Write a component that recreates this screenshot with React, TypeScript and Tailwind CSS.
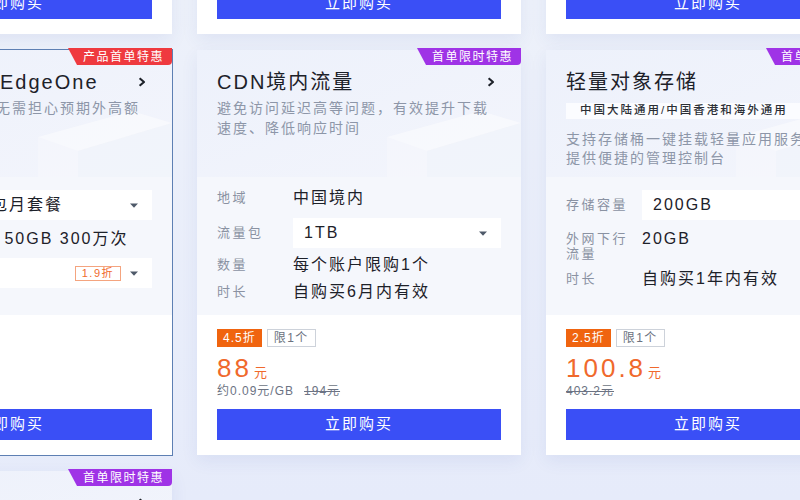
import React from "react";

type Spec = {
  label: string;
  value: string;
  select?: boolean;
  tag?: string;
  twoLine?: boolean;
  mt: string;
};

type CardData = {
  title: string;
  desc: string;
  regionTag?: string;
  badge?: { text: string; color: "red" | "purple" };
  highlight?: boolean;
  specs: Spec[];
  discount: string;
  price: string;
  unitPrice?: string;
  original: string;
};

function Caret() {
  return (
    <svg width="8" height="5" viewBox="0 0 8 5" className="shrink-0">
      <path d="M0 0.5h8L4 4.8z" fill="#4e5969" />
    </svg>
  );
}

function Chevron() {
  return (
    <svg width="8" height="10" viewBox="0 0 8 10" className="mr-[6px] shrink-0">
      <path d="M1.6 1.2 6 5 1.6 8.8" fill="none" stroke="#1d2129" strokeWidth="2.1" strokeLinejoin="round" />
    </svg>
  );
}

function Deco() {
  return (
    <svg
      width="140"
      height="66"
      viewBox="0 0 140 66"
      className="pointer-events-none absolute bottom-0 right-0"
    >
      <path d="M6 26 L100 0 L140 12 L140 66 L6 66 Z" fill="#ffffff" opacity="0.22" />
      <path d="M6 26 L100 0 L140 12 L46 40 Z" fill="#ffffff" opacity="0.3" />
      <path d="M46 40 L140 12 L140 66 L46 66 Z" fill="#e9eef9" opacity="0.25" />
    </svg>
  );
}

function Badge({ text, color }: { text: string; color: "red" | "purple" }) {
  return (
    <div
      className={
        color === "red"
          ? "absolute -top-[2px] right-0 flex h-[17px] w-[104px] items-center rounded-br-[4px] bg-[#ef3a3f] pl-[15px] text-[12px] leading-none tracking-[1.5px] text-white [clip-path:polygon(0_0,100%_0,100%_100%,9px_100%)]"
          : "absolute -top-[2px] right-0 flex h-[17px] w-[104px] items-center rounded-br-[4px] bg-[#9f33e6] pl-[15px] text-[12px] leading-none tracking-[1.5px] text-white [clip-path:polygon(0_0,100%_0,100%_100%,9px_100%)]"
      }
    >
      {text}
    </div>
  );
}

function SpecRow({ s }: { s: Spec }) {
  if (s.select) {
    return (
      <div className={"flex items-center " + s.mt}>
        <span className="w-[76px] shrink-0 whitespace-nowrap text-[13px] tracking-[2.5px] text-[#8a92a2]">
          {s.label}
        </span>
        <div className="flex h-[30px] min-w-0 flex-1 items-center justify-between bg-white pl-[11px] pr-[14px]">
          <span className="whitespace-nowrap text-[16px] tracking-[2px] text-[#1d2129]">{s.value}</span>
          <div className="flex items-center gap-[9px]">
            {s.tag ? (
              <span className="flex h-[15px] items-center border border-[#f4a47f] bg-white px-[6px] text-[11px] leading-none tracking-[1.5px] text-[#f06b2e]">
                {s.tag}
              </span>
            ) : null}
            <Caret />
          </div>
        </div>
      </div>
    );
  }
  if (s.twoLine) {
    return (
      <div className={"flex items-start " + s.mt}>
        <span className="w-[76px] shrink-0 text-[13px] leading-[15px] tracking-[2.5px] text-[#8a92a2]">
          {s.label}
        </span>
        <span className="whitespace-nowrap text-[16px] leading-[15px] tracking-[2px] text-[#1d2129]">{s.value}</span>
      </div>
    );
  }
  return (
    <div className={"flex h-5 items-center " + s.mt}>
      <span className="w-[76px] shrink-0 whitespace-nowrap text-[13px] tracking-[2.5px] text-[#8a92a2]">
        {s.label}
      </span>
      <span className="whitespace-nowrap text-[16px] tracking-[2px] text-[#1d2129]">{s.value}</span>
    </div>
  );
}

function Card({ c }: { c: CardData }) {
  return (
    <div
      className={
        c.highlight
          ? "relative flex h-[405px] flex-col bg-white ring-1 ring-[#5d7fb3]"
          : "relative flex h-[405px] flex-col bg-white shadow-[0_6px_16px_rgba(50,80,170,0.08)]"
      }
    >
      <div className="relative h-[127px] overflow-hidden bg-gradient-to-br from-[#edf1fb] to-[#f3f5fc] px-5 pt-[18px]">
        <Deco />
        <div className="relative flex h-7 items-center justify-between">
          <span className="whitespace-nowrap text-[20px] tracking-[2px] text-[#1d2129]">{c.title}</span>
          <Chevron />
        </div>
        {c.regionTag ? (
          <div className="relative mt-[7px] inline-flex h-[16px] items-center whitespace-nowrap bg-[#fbfcff] px-[14px] text-[11.5px] font-medium tracking-[2px] text-[#2b2f36]">
            {c.regionTag}
          </div>
        ) : null}
        <p
          className={
            c.regionTag
              ? "relative mt-[9px] text-[14px] leading-[19px] tracking-[2px] text-[#8d96a8]"
              : "relative mt-[2px] text-[14px] leading-5 tracking-[2px] text-[#8d96a8]"
          }
        >
          {c.desc}
        </p>
      </div>

      <div className="flex h-[138px] flex-col bg-[#f5f7fc] px-5">
        {c.specs.map((s, i) => (
          <SpecRow key={i} s={s} />
        ))}
      </div>

      <div className="flex flex-1 flex-col px-5 pb-[15px] pt-[14px]">
        <div className="flex gap-[5px]">
          <span className="flex h-[18px] items-center bg-[#f0640f] px-[6px] text-[12px] leading-none tracking-[1px] text-white">
            {c.discount}
          </span>
          <span className="flex h-[18px] items-center border border-[#cdd2da] px-[6px] text-[12px] leading-none tracking-[1.5px] text-[#6b7280]">
            限1个
          </span>
        </div>
        <div className="mt-[6px] flex h-[30px] items-baseline">
          <span className="text-[26px] leading-[30px] tracking-[3px] text-[#f0692c]">{c.price}</span>
          <span className="ml-[2px] text-[13px] text-[#f0692c]">元</span>
        </div>
        <div className="whitespace-nowrap text-[12px] leading-4 tracking-[1px] text-[#6c7383]">
          {c.unitPrice ? <span className="mr-[10px]">{c.unitPrice}</span> : null}
          <s>{c.original}</s>
        </div>
        <button className="mt-auto h-[31px] w-full bg-[#3a4ff6] text-[15px] tracking-[2px] text-white">
          立即购买
        </button>
      </div>
    </div>
  );
}

const simpleSpecs: Spec[] = [
  { label: "地域", value: "中国境内", mt: "mt-[11px]" },
  { label: "规格", value: "标准型", select: true, mt: "mt-[10px]" },
  { label: "数量", value: "每个账户限购1个", mt: "mt-[7px]" },
  { label: "时长", value: "1年", mt: "mt-[7px]" },
];

const cards: CardData[] = [
  {
    title: "云服务器",
    desc: "稳定可靠、弹性扩展的云端计算服务",
    specs: simpleSpecs,
    discount: "2.2折",
    price: "99",
    original: "450元",
  },
  {
    title: "云数据库",
    desc: "高性能、高可用的数据库服务",
    specs: simpleSpecs,
    discount: "3折",
    price: "59",
    original: "196元",
  },
  {
    title: "对象存储",
    desc: "安全稳定的海量存储服务",
    specs: simpleSpecs,
    discount: "2折",
    price: "36",
    original: "180元",
  },
  {
    title: "边缘安全加速EdgeOne",
    desc: "价格固定且透明，无需担心预期外高额账单",
    badge: { text: "产品首单特惠", color: "red" },
    highlight: true,
    specs: [
      { label: "规格", value: "标准包月套餐", select: true, mt: "mt-[13px]" },
      { label: "套餐内容", value: "每月含 50GB 300万次", mt: "mt-[9px]" },
      { label: "时长", value: "1个月", select: true, tag: "1.9折", mt: "mt-[9px]" },
    ],
    discount: "1.9折",
    price: "28.8",
    unitPrice: "约0.58元",
    original: "148元",
  },
  {
    title: "CDN境内流量",
    desc: "避免访问延迟高等问题，有效提升下载速度、降低响应时间",
    badge: { text: "首单限时特惠", color: "purple" },
    specs: [
      { label: "地域", value: "中国境内", mt: "mt-[11px]" },
      { label: "流量包", value: "1TB", select: true, mt: "mt-[10px]" },
      { label: "数量", value: "每个账户限购1个", mt: "mt-[7px]" },
      { label: "时长", value: "自购买6月内有效", mt: "mt-[7px]" },
    ],
    discount: "4.5折",
    price: "88",
    unitPrice: "约0.09元/GB",
    original: "194元",
  },
  {
    title: "轻量对象存储",
    desc: "支持存储桶一键挂载轻量应用服务器，提供便捷的管理控制台",
    regionTag: "中国大陆通用/中国香港和海外通用",
    badge: { text: "首单限时特惠", color: "purple" },
    specs: [
      { label: "存储容量", value: "200GB", select: true, mt: "mt-[13px]" },
      { label: "外网下行流量", value: "20GB", twoLine: true, mt: "mt-[11px]" },
      { label: "时长", value: "自购买1年内有效", mt: "mt-[8px]" },
    ],
    discount: "2.5折",
    price: "100.8",
    original: "403.2元",
  },
  {
    title: "云服务器",
    desc: "高性价比云服务器，开箱即用",
    badge: { text: "首单限时特惠", color: "purple" },
    specs: simpleSpecs,
    discount: "3折",
    price: "79",
    original: "263元",
  },
];

export default function App() {
  return (
    <div className="h-[500px] w-[800px] overflow-hidden bg-gradient-to-b from-[#edf1fa] to-[#e6ebfa] [font-family:'Liberation_Sans','Noto_Sans_CJK_SC',sans-serif]">
      <div className="-ml-[152px] -mt-[371px] grid w-[1022px] grid-cols-[324px_324px_324px] gap-x-[25px] gap-y-4">
        {cards.map((c, i) => (
          <div key={i} className="relative">
            <Card c={c} />
            {c.badge ? <Badge text={c.badge.text} color={c.badge.color} /> : null}
          </div>
        ))}
      </div>
    </div>
  );
}
